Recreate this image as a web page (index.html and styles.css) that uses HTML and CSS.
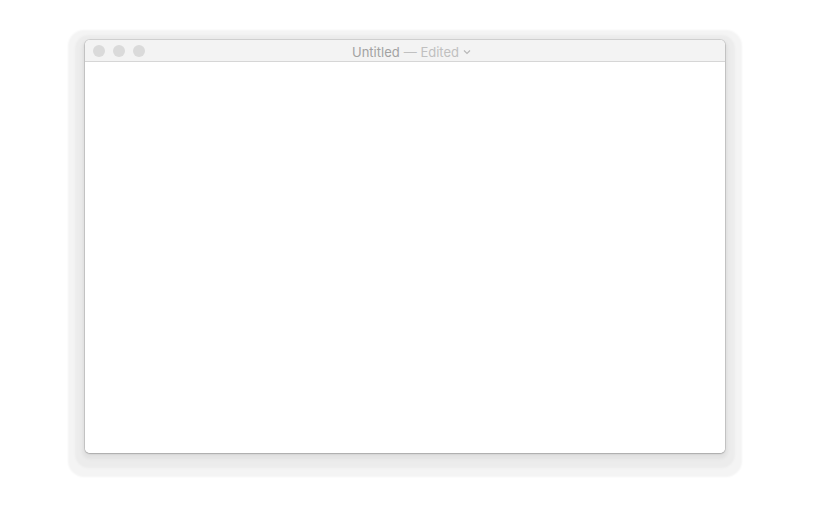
FILE: index.html
```html
<!DOCTYPE html>
<html>
<head>
<meta charset="utf-8">
<link rel="stylesheet" href="styles.css">
</head>
<body>
<div class="stage">
  <div class="window">
    <div class="titlebar">
      <div class="lights">
        <span class="light"></span>
        <span class="light"></span>
        <span class="light"></span>
      </div>
      <div class="title">
        <span class="name">Untitled</span>
        <span class="edited">— Edited</span>
        <svg class="chev" width="8" height="6" viewBox="0 0 8 6"><path d="M1 1.5 L4 4.5 L7 1.5" fill="none" stroke="#b8b8b8" stroke-width="1.2"/></svg>
      </div>
    </div>
    <div class="content"></div>
  </div>
</div>
</body>
</html>
```

FILE: styles.css
```css
html, body {
  margin: 0;
  padding: 0;
  background: #ffffff;
}
.stage {
  width: 814px;
  height: 510px;
  padding: 40px 0 0 85px;
  box-sizing: border-box;
}
.window {
  width: 640px;
  height: 413px;
  background: #ffffff;
  border-radius: 5px;
  display: flex;
  flex-direction: column;
  overflow: hidden;
  box-shadow:
    0 0 0 1px rgba(0,0,0,0.10),
    0 1px 2px rgba(0,0,0,0.18),
    0 3px 3px 3px #e2e2e2,
    0 5px 2px 10px #ececec,
    0 7px 2px 17px #f4f4f4;
}
.titlebar {
  height: 22px;
  flex: none;
  background: #f3f3f3;
  border-bottom: 1px solid #d6d6d6;
  position: relative;
  display: flex;
  align-items: center;
  justify-content: center;
  box-sizing: border-box;
}
.lights {
  position: absolute;
  left: 8px;
  top: 5px;
  display: flex;
  gap: 8px;
}
.light {
  width: 12px;
  height: 12px;
  border-radius: 50%;
  background: #dadada;
}
.title {
  font-family: Inter, "Noto Sans", sans-serif;
  font-size: 13px;
  display: flex;
  align-items: center;
  gap: 4px;
  margin-left: 13px;
  margin-top: 2px;
}
.name {
  color: #a2a2a2;
}
.edited {
  color: #c0c0c0;
}
.chev {
  margin-top: 1px;
}
.content {
  flex: 1;
  background: #ffffff;
}
```
